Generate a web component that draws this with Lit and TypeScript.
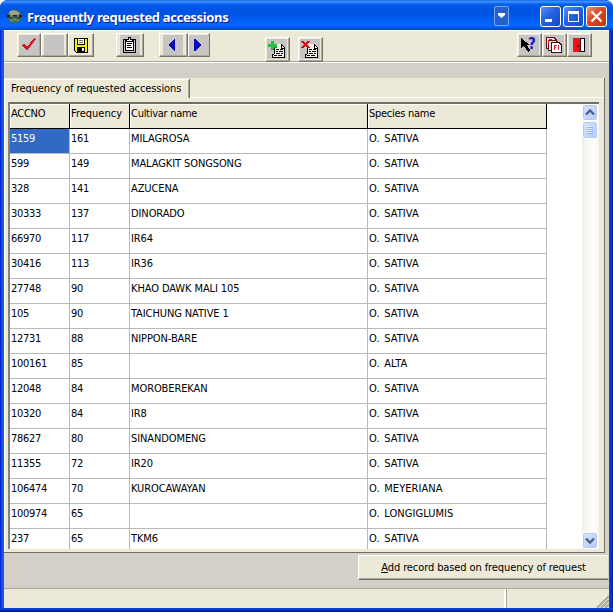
import { LitElement, html, svg, css, nothing } from "lit";
import { customElement, property } from "lit/decorators.js";

const ROWS: [string, string, string, string][] = [
  ["5159", "161", "MILAGROSA", "O. SATIVA"],
  ["599", "149", "MALAGKIT SONGSONG", "O. SATIVA"],
  ["328", "141", "AZUCENA", "O. SATIVA"],
  ["30333", "137", "DINORADO", "O. SATIVA"],
  ["66970", "117", "IR64", "O. SATIVA"],
  ["30416", "113", "IR36", "O. SATIVA"],
  ["27748", "90", "KHAO DAWK MALI 105", "O. SATIVA"],
  ["105", "90", "TAICHUNG NATIVE 1", "O. SATIVA"],
  ["12731", "88", "NIPPON-BARE", "O. SATIVA"],
  ["100161", "85", "", "O. ALTA"],
  ["12048", "84", "MOROBEREKAN", "O. SATIVA"],
  ["10320", "84", "IR8", "O. SATIVA"],
  ["78627", "80", "SINANDOMENG", "O. SATIVA"],
  ["11355", "72", "IR20", "O. SATIVA"],
  ["106474", "70", "KUROCAWAYAN", "O. MEYERIANA"],
  ["100974", "65", "", "O. LONGIGLUMIS"],
  ["237", "65", "TKM6", "O. SATIVA"],
];

const page = svg`
  <path d="M9 5H14L18 9V18H5V15H7V9H9Z" fill="#f4f2e4" />
  <path d="M14 5.500H15M15 6.500H16M16 7.500H17M14.500 5V9M14 9.500H18M17.500 8V18M5 18.500H18M5.500 15V18M7.500 9V15M5 15.500H7M9 10.500H12M13 10.500H16M9 12.500H11M12 12.500H16M9 14.500H13M14 14.500H16M7 16.500H10M11 16.500H15" stroke="#000" fill="none" />`;

const ICONS: Record<string, unknown> = {
  check: svg`<path d="M3 10L5 9L8 12L15 3L17 4L8 16Z" fill="#e01020" /><path d="M9 14L16 5" stroke="#a85058" />`,
  blank: nothing,
  save: svg`
    <path d="M3.500 3.500H16.500V17.500H5.500L3.500 15.500Z" fill="#f8f400" stroke="#000" />
    <path d="M6.500 3.500H13.500V9.500H6.500Z" fill="#fff" stroke="#000" />
    <path d="M8 5.500H12M8 7.500H12" stroke="#777" />
    <path d="M6 12H14V17H6Z" fill="#000" /><path d="M11 13H13V16H11Z" fill="#fff" />`,
  clipboard: svg`
    <path d="M3 4H16V18H3Z" fill="#000" /><path d="M4 5H15V17H4Z" fill="#c6c5c3" />
    <path d="M5.500 5.500H13.500V15.500H5.500Z" fill="#fff" stroke="#000" />
    <path d="M6.500 6.500V4.500H8.500V2.500H10.500V4.500H12.500V6.500Z" fill="#f0eed8" stroke="#000" />
    <path d="M7 8.500H12M7 10.500H11M7 12.500H12" stroke="#000" />`,
  prev: svg`<path d="M12 4V16H11L5 10L11 4Z" fill="#0909b5" />`,
  next: svg`<path d="M5 4V16H6L12 10L6 4Z" fill="#0909b5" />`,
  add: svg`${page}<path d="M4 2H7V5H10V8H7V11H4V8H1V5H4Z" fill="#24c13c" /><path d="M7 8.500H10M4 10.500H7" stroke="#0e9128" fill="none" />`,
  remove: svg`${page}<path d="M1 2H4L5.500 4L8 2H10L7 5.500L10 9H7L5 7L3 9H1L4 5.500Z" fill="#cf1018" />`,
  help: svg`
    <path d="M2 3V13L5 11L9 17L11 15L8 10H11Z" fill="#000" />
    <text class="q" x="9" y="14">?</text>`,
  copies: svg`
    <path d="M2.500 2.500H10L12.500 5V13.500H2.500Z" fill="#f2dede" stroke="#631414" />
    <path d="M4.500 5.500H12L14.500 8V15.500H4.500Z" fill="#f2dede" stroke="#631414" />
    <path d="M7.500 7.500H15L17.500 10V17.500H7.500Z" fill="#fff" stroke="#400c0c" />
    <path d="M4.500 5V9M5 4.500H8M10.500 15V10.500H13M10 12.500H12M14.500 10V15" stroke="#d42230" fill="none" />`,
  exit: svg`
    <path d="M4.500 3.500H15.500V16.500H4.500Z" fill="#fff" stroke="#000" />
    <path d="M4 3H11V15L10 17H4Z" fill="#ee1119" /><path d="M11.500 4V17" stroke="#420000" />
    <path d="M8 10H10V12H8Z" fill="#6b0000" />`,
};

@customElement("tool-button")
class ToolButton extends LitElement {
  @property() icon = "blank";
  static styles = css`
    :host { display: flex; flex: none; box-sizing: border-box; width: 24px; height: 24px; align-items: center; justify-content: center;
      background: #ece9d8; border: 1px solid; border-color: #fff #77756b #77756b #fff; box-shadow: inset -1px -1px #aca899; }
    svg { display: block; flex: none; width: 20px; height: 20px; background: var(--plate, #c6c5c3); margin: 0 1px 1px 0; shape-rendering: crispEdges; }
    .q { font: bold 15px "DejaVu Sans Condensed", sans-serif; fill: #1818c8; }
  `;
  render() {
    return html`<svg viewBox="0 0 20 20">${ICONS[this.icon]}</svg>`;
  }
}

@customElement("scroll-strip")
class ScrollStrip extends LitElement {
  static styles = css`
    :host { display: flex; flex-direction: column; width: 17px; background: linear-gradient(90deg, #f0efe7, #fff 70%, #f5f4ef); }
    .btn { box-sizing: border-box; height: 17px; width: 16px; margin-left: 0; border: 1px solid #fff; border-radius: 3px;
      background: linear-gradient(135deg, #d7e4ff, #b5cbf8); box-shadow: inset 0 0 0 1px #b4c8f0; }
    .btn.thumb { height: 18px; }
    .gap { flex: 1; }
    svg { display: block; width: 14px; height: 15px; }
  `;
  render() {
    return html`
      <div class="btn"><svg viewBox="0 0 14 15"><path d="M3 9.500L7 5.500L11 9.500" stroke="#4d6185" stroke-width="2.400" fill="none" /></svg></div>
      <div class="btn thumb"><svg viewBox="0 0 14 15"><path d="M4 5.500H10M4 7.500H10M4 9.500H10M4 11.500H10" stroke="#8cb0f8" /><path d="M4 4.500H9M4 6.500H9M4 8.500H9M4 10.500H9" stroke="#eef4fe" /></svg></div>
      <div class="gap"></div>
      <div class="btn"><svg viewBox="0 0 14 15"><path d="M3 5.500L7 9.500L11 5.500" stroke="#4d6185" stroke-width="2.400" fill="none" /></svg></div>`;
  }
}

@customElement("app-root")
class AppRoot extends LitElement {
  static styles = css`
    :host { display: block; width: 613px; height: 612px; background: #f4f4f0; overflow: hidden;
      font: 11px "DejaVu Sans Condensed", "DejaVu Sans", sans-serif; letter-spacing: -0.1px; color: #000; }
    .window { box-sizing: border-box; width: 613px; height: 612px; display: flex; flex-direction: column; overflow: hidden;
      border-radius: 8px 8px 0 0; padding: 0 4px 4px;
      background: linear-gradient(90deg, #0019cf, #0831d9 1px, #166aee 3px, #0855dd 4px, #0855dd 609px, #0441d8 610px, #001ea0 613px);
      box-shadow: inset 0 -2px #001ea0, inset 0 -4px #0441d8; }
    .title { flex: none; height: 30px; margin: 0 -4px; display: flex; align-items: center; padding: 2px 6px 0 7px; box-sizing: border-box;
      background: linear-gradient(#0a5bdc 0, #3b8efa 1px, #3b8efa 2px, #0a60ee 4px, #0054e3 8px, #0054e3 14px, #0361fa 21px, #0665fb 26px, #0355e0 28px, #0344c4 30px); }
    .logo { width: 15px; height: 15px; flex: none; }
    .title h1 { margin: 2px 0 0 5px; flex: 1; font: bold 13px "Noto Sans", sans-serif; letter-spacing: -0.34px; color: #fff; text-shadow: 1px 1px #0a1883; white-space: nowrap; }
    .cap { box-sizing: border-box; flex: none; width: 21px; height: 21px; margin-left: 2px; border: 1px solid #fff; border-radius: 3px; background: linear-gradient(135deg, #5b8ef5, #2461e2 45%, #1449c8); }
    .cap.close { background: linear-gradient(135deg, #ee9077, #dc4a24 45%, #bd330e); }
    .cap.drop { width: 15px; height: 20px; margin: 0 29px 0 0; border-color: #7ba6ee; border-radius: 2px; background: #2560cc; }
    .cap svg { display: block; width: 100%; height: 100%; }
    .tools { flex: none; height: 32px; background: #ece9d8; border-bottom: 1px solid #aca899; box-shadow: inset 0 1px #fff; display: flex; padding: 3px 17px 0 13px; box-sizing: border-box; }
    .plain { --plate: #ece9d8; width: 26px; }
    .w27 { width: 27px; }
    .w28 { width: 28px; margin-left: 22px; }
    .w29 { width: 29px; margin-left: 15px; }
    .w22 { width: 22px; }
    .w25 { width: 25px; }
    .low { margin: 4px 0 0 8px; width: 25px; height: 25px; }
    .low.first { margin-left: 55px; }
    .space { flex: 1; }
    .band { flex: none; height: 16px; background: #d4d0c8; border-top: 1px solid #fff; box-sizing: border-box; }
    .sheet { flex: none; height: 475px; background: #d4d0c8; display: flex; }
    .panel { width: 601px; background: #ece9d8; display: flex; flex-direction: column; box-sizing: border-box; border-right: 1px solid #716f64; border-bottom: 1px solid #716f64; box-shadow: inset 1px 0 #fff; }
    .tabs { height: 20px; flex: none; display: flex; }
    .tab { width: 186px; box-sizing: border-box; border-right: 1px solid #716f64; box-shadow: inset 1px 1px #fff, inset -1px 0 #aca899; margin-top: 1px; padding: 2px 0 0 7px; line-height: 15px; white-space: nowrap; }
    .rest { flex: 1; border-bottom: 1px solid #fff; }
    .frame { margin: 4px 5px 0 4px; height: 447px; box-sizing: border-box; border: solid #716f64; border-width: 2px 0 0 2px; border-left-color: #85837a; background: #fff; display: flex; overflow: hidden; }
    .grid { width: 537px; display: grid; grid-template-columns: 60px 60px 238px 179px; grid-template-rows: 25px; grid-auto-rows: 25px; height: 445px; overflow: hidden; }
    .grid div { box-sizing: border-box; border-right: 1px solid #b9b9b9; border-bottom: 1px solid #b9b9b9; padding: 1px 0 0 1px; line-height: 17px; white-space: nowrap; overflow: hidden; }
    .grid div.num { letter-spacing: -0.28px; }
    .grid .head { background: #ece9d8; border-color: #000; box-shadow: inset 1px 1px #fff; letter-spacing: -0.28px; }
    .grid .head:nth-child(2) { letter-spacing: 0; }
    .grid .sel { background: #316ac5; color: #fff; }
    .grid .species { word-spacing: 1.5px; letter-spacing: 0.05px; }
    scroll-strip { margin-left: auto; }
    .foot { flex: none; height: 35px; background: #d4d0c8; display: flex; justify-content: flex-end; align-items: flex-start; }
    .action { margin-top: 2px; width: 251px; height: 25px; box-sizing: border-box; background: #ece9d8; border: 1px solid; border-color: #fff #d4d0c8 #716f64 #fff; box-shadow: inset 0 -1px #aca899; text-align: center; line-height: 24px; white-space: nowrap; }
    .status { flex: 1; background: #ece9d8; border-top: 1px solid #aca899; display: flex; justify-content: flex-end; }
    .cell { width: 102px; border-left: 1px solid #aca899; box-shadow: -2px 0 #fff; display: flex; justify-content: flex-end; align-items: flex-end; }
    .cell svg { width: 13px; height: 13px; }
  `;

  render() {
    return html`<div class="window">
      <div class="title">
        <svg class="logo" viewBox="0 0 15 15">
          <circle cx="7.500" cy="7.500" r="7" fill="#426b50" /><path d="M2 3Q7 -1 13 4L11 6H3Z" fill="#9da48a" />
          <path d="M0 6H15V8L11 9L8 7L4 9L0 8Z" fill="#17241d" /><path d="M3 7H6M10 7H12" stroke="#dae6b5" /><path d="M3 12Q8 9 12 12" stroke="#83a66b" fill="none" />
        </svg>
        <h1>Frequently requested accessions</h1>
        <div class="cap drop"><svg viewBox="0 0 13 18"><path d="M3 6H10V8L6.500 11L3 8Z" fill="#fff" /></svg></div>
        <div class="cap"><svg viewBox="0 0 19 19"><path d="M4 12H11V15H4Z" fill="#fff" /></svg></div>
        <div class="cap"><svg viewBox="0 0 19 19"><path d="M4.500 5V14.500H14.500V5" fill="none" stroke="#fff" /><path d="M4 4H15V7H4Z" fill="#fff" /></svg></div>
        <div class="cap close"><svg viewBox="0 0 19 19"><path d="M4.500 4.500L14.500 14.500M14.500 4.500L4.500 14.500" stroke="#fff" stroke-width="2.200" /></svg></div>
      </div>
      <div class="tools">
        <tool-button icon="check"></tool-button>
        <tool-button class="w27" icon="blank"></tool-button>
        <tool-button class="plain" icon="save"></tool-button>
        <tool-button class="w28" icon="clipboard"></tool-button>
        <tool-button class="w29" icon="prev"></tool-button>
        <tool-button class="w22" icon="next"></tool-button>
        <tool-button class="low first" icon="add"></tool-button>
        <tool-button class="low" icon="remove"></tool-button>
        <div class="space"></div>
        <tool-button class="w25" icon="help"></tool-button>
        <tool-button class="w25" icon="copies"></tool-button>
        <tool-button class="w25" icon="exit"></tool-button>
      </div>
      <div class="band"></div>
      <div class="sheet"><div class="panel">
        <div class="tabs"><div class="tab">Frequency of requested accessions</div><div class="rest"></div></div>
        <div class="frame">
          <div class="grid">
            ${["ACCNO", "Frequency", "Cultivar name", "Species name"].map((h) => html`<div class="head">${h}</div>`)}
            ${ROWS.map((r, i) => r.map((c, j) => html`<div class="${j < 2 ? "num" : ""} ${j === 3 ? "species" : ""} ${i === 0 && j === 0 ? "sel" : ""}">${c}</div>`))}
          </div>
          <scroll-strip></scroll-strip>
        </div>
      </div></div>
      <div class="foot"><div class="action"><u>A</u>dd record based on frequency of request</div></div>
      <div class="status"><div class="cell"><svg viewBox="0 0 13 13"><path d="M1 13L13 1M5 13L13 5M9 13L13 9" stroke="#aca899" stroke-width="2" /></svg></div></div>
    </div>`;
  }
}
